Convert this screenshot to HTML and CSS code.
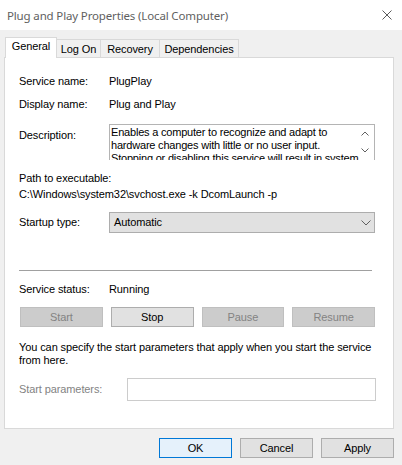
FILE: index.html
```html
<!DOCTYPE html>
<html lang="en">
<head>
<meta charset="utf-8">
<title>Plug and Play Properties (Local Computer)</title>
<link rel="stylesheet" href="styles.css">
</head>
<body>
<div class="window">
  <div class="titlebar">
    <span class="title">Plug and Play Properties (Local Computer)</span>
    <svg class="close" width="10" height="10" viewBox="0 0 10 10"><path d="M0.5 0.5 L9.5 9.5 M9.5 0.5 L0.5 9.5" stroke="#5a5a5a" stroke-width="1" fill="none"/></svg>
  </div>
  <div class="tabs">
    <div class="tab active tab-general">General</div>
    <div class="tab tab-logon">Log On</div>
    <div class="tab tab-recovery">Recovery</div>
    <div class="tab tab-deps">Dependencies</div>
  </div>
  <div class="panel">
    <div class="row r1"><span class="label">Service name:</span><span>PlugPlay</span></div>
    <div class="row r2"><span class="label">Display name:</span><span>Plug and Play</span></div>
    <div class="row r3">
      <span class="label label-desc">Description:</span>
      <div class="textbox">
        <div class="textbox-text">Enables a computer to recognize and adapt to hardware changes with little or no user input. Stopping or disabling this service will result in system instability.</div>
        <div class="scrollbar">
          <div class="sb-btn"><svg width="8" height="5" viewBox="0 0 8 5"><path d="M0.5 4.5 L4 1 L7.5 4.5" stroke="#606060" fill="none"/></svg></div>
          <div class="sb-btn"><svg width="8" height="5" viewBox="0 0 8 5"><path d="M0.5 0.5 L4 4 L7.5 0.5" stroke="#606060" fill="none"/></svg></div>
        </div>
      </div>
    </div>
    <div class="line r4">Path to executable:</div>
    <div class="line r5">C:\Windows\system32\svchost.exe -k DcomLaunch -p</div>
    <div class="row r6">
      <span class="label label-combo">Startup type:</span>
      <div class="combo">
        <span>Automatic</span>
        <svg width="10" height="6" viewBox="0 0 10 6"><path d="M0.5 0.5 L5 5 L9.5 0.5" stroke="#606060" fill="none"/></svg>
      </div>
    </div>
    <div class="separator"></div>
    <div class="row r8"><span class="label">Service status:</span><span>Running</span></div>
    <div class="svc-buttons">
      <div class="btn disabled">Start</div>
      <div class="btn">Stop</div>
      <div class="btn disabled">Pause</div>
      <div class="btn disabled">Resume</div>
    </div>
    <p class="hint">You can specify the start parameters that apply when you start the service from here.</p>
    <div class="row r11">
      <span class="label label-params">Start parameters:</span>
      <div class="input"></div>
    </div>
  </div>
  <div class="dlg-buttons">
    <div class="btn dlg default">OK</div>
    <div class="btn dlg">Cancel</div>
    <div class="btn dlg">Apply</div>
  </div>
</div>
</body>
</html>
```
FILE: styles.css
```css
html, body {
  margin: 0;
  padding: 0;
}
body {
  background: #f0f0f0;
  font-family: "Liberation Sans", Arial, sans-serif;
  font-size: 11px;
  line-height: 13px;
  letter-spacing: -0.1px;
  color: #000;
}
.window {
  width: 402px;
  height: 465px;
  overflow: hidden;
}
.titlebar {
  height: 30px;
  background: #fff;
  display: flex;
  align-items: center;
  justify-content: space-between;
  padding: 0 10px 0 7px;
  box-sizing: border-box;
}
.title {
  font-family: "Noto Sans", "Open Sans", sans-serif;
  font-size: 11.5px;
  color: #5f5f5f;
  letter-spacing: -0.15px;
}
.close {
  display: block;
}
.tabs {
  display: flex;
  align-items: flex-start;
  margin: 7px 0 0 5px;
  height: 21px;
}
.tab {
  box-sizing: border-box;
  height: 18px;
  margin-top: 2px;
  border: 1px solid #d9d9d9;
  border-bottom: none;
  border-left: none;
  background: #f0f0f0;
  text-align: center;
  line-height: 18px;
}
.tab.active {
  position: relative;
  z-index: 1;
  height: 21px;
  margin-top: 0;
  background: #fff;
  border-left: 1px solid #d9d9d9;
  line-height: 17px;
}
.tab-general { width: 52px; }
.tab-logon { width: 44px; }
.tab-recovery { width: 59px; }
.tab-deps { width: 79px; }
.panel {
  box-sizing: border-box;
  margin: -1px 0 0 4px;
  width: 390px;
  height: 372px;
  border: 1px solid #d9d9d9;
  background: #fff;
  padding: 17px 18px 0 14px;
}
.row {
  display: flex;
  align-items: flex-start;
}
.label {
  width: 90px;
  flex: none;
}
.r2 { margin-top: 10px; }
.r3 { margin-top: 13px; }
.label-desc { padding-top: 5px; }
.textbox {
  flex: 1;
  height: 36px;
  box-sizing: border-box;
  border: 1px solid #b4b4b4;
  border-bottom: none;
  display: flex;
  overflow: hidden;
}
.textbox-text {
  flex: 1;
  padding: 1px 0 0 1px;
  overflow: hidden;
  letter-spacing: -0.2px;
}
.scrollbar {
  width: 13px;
  flex: none;
  display: flex;
  flex-direction: column;
}
.sb-btn {
  height: 17px;
  display: flex;
  align-items: center;
  justify-content: flex-start;
}
.sb-btn svg { display: block; }
.r4 { margin-top: 12px; }
.r5 { margin-top: 3px; }
.r6 { margin-top: 11px; }
.label-combo { line-height: 21px; }
.combo {
  flex: 1;
  height: 21px;
  box-sizing: border-box;
  border: 1px solid #adadad;
  background: #e1e1e1;
  display: flex;
  align-items: center;
  justify-content: space-between;
  padding: 0 3px 0 4px;
}
.combo svg { display: block; }
.separator {
  margin: 37px 3px 0 0;
  height: 1px;
  background: #a0a0a0;
}
.r8 { margin-top: 12px; }
.svc-buttons {
  margin-top: 11px;
  margin-left: 1px;
  display: grid;
  grid-template-columns: repeat(4, 1fr);
  column-gap: 8px;
}
.btn {
  box-sizing: border-box;
  height: 20px;
  border: 1px solid #adadad;
  background: #e1e1e1;
  display: flex;
  align-items: center;
  justify-content: center;
}
.btn.disabled {
  background: #cccccc;
  border-color: #bfbfbf;
  color: #838383;
}
.hint {
  margin: 14px 0 0 0;
}
.r11 { margin-top: 11px; }
.label-params {
  width: 108px;
  line-height: 23px;
  color: #838383;
}
.input {
  flex: 1;
  height: 23px;
  box-sizing: border-box;
  border: 1px solid #cccccc;
  margin-right: -1px;
}
.dlg-buttons {
  display: flex;
  justify-content: flex-end;
  column-gap: 8px;
  margin-top: 9px;
  padding-right: 8px;
}
.btn.dlg {
  width: 73px;
}
.btn.default {
  border-color: #0078d7;
  background: #e5f1fb;
}
```
